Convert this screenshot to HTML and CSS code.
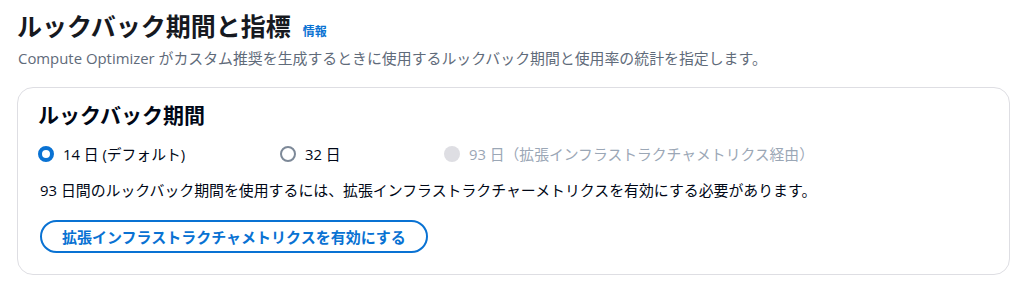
FILE: index.html
```html
<!DOCTYPE html>
<html lang="ja">
<head>
<meta charset="utf-8">
<link rel="stylesheet" href="styles.css">
</head>
<body>
<div class="page">
  <div class="header">
    <h1 class="title">ルックバック期間と指標</h1>
    <a class="info">情報</a>
  </div>
  <p class="desc">Compute Optimizer がカスタム推奨を生成するときに使用するルックバック期間と使用率の統計を指定します。</p>
  <div class="card">
    <h2 class="card-title">ルックバック期間</h2>
    <div class="radios">
      <label class="radio r1"><span class="dot checked"></span><span>14 日 (デフォルト)</span></label>
      <label class="radio r2"><span class="dot"></span><span>32 日</span></label>
      <label class="radio r3 disabled"><span class="dot off"></span><span>93 日（拡張インフラストラクチャメトリクス経由）</span></label>
    </div>
    <p class="note">93 日間のルックバック期間を使用するには、拡張インフラストラクチャーメトリクスを有効にする必要があります。</p>
    <button class="btn">拡張インフラストラクチャメトリクスを有効にする</button>
  </div>
</div>
</body>
</html>
```
FILE: styles.css
```css
* { box-sizing: border-box; }
body {
  margin: 0;
  background: #fff;
  font-family: "Open Sans", "Noto Sans CJK JP", sans-serif;
  color: #000716;
}
.page {
  padding: 8px 14px 0 17px;
}
.header {
  display: flex;
  align-items: baseline;
  gap: 12px;
}
.title {
  margin: 0;
  font-size: 25px;
  font-weight: 700;
  line-height: 36px;
  color: #16191f;
}
.info {
  font-size: 12px;
  font-weight: 700;
  color: #0972d3;
}
.desc {
  margin: 3px 0 0 1px;
  font-size: 14.9px;
  line-height: 22px;
  color: #5f6b7a;
}
.card {
  margin-top: 18px;
  width: 993px;
  border: 1px solid #dedee3;
  border-radius: 16px;
  padding: 12px 20px 21px;
}
.card-title {
  margin: 0;
  font-size: 21px;
  font-weight: 700;
  line-height: 30px;
  color: #000716;
}
.radios {
  display: flex;
  margin-top: 13px;
  font-size: 14.8px;
  line-height: 22px;
}
.radio {
  display: flex;
  align-items: center;
  gap: 9px;
  color: #000716;
}
.r1 { width: 242px; }
.r2 { width: 164px; }
.disabled { color: #9ba7b6; }
.dot {
  width: 16px;
  height: 16px;
  border-radius: 50%;
  border: 2px solid #7d8998;
  background: #fff;
}
.dot.checked {
  border: 4px solid #0972d3;
}
.dot.off {
  border: none;
  background: #dedee3;
}
.note {
  margin: 14px 0 0 2px;
  font-size: 14.9px;
  line-height: 22px;
  color: #000716;
}
.btn {
  display: block;
  margin: 19px 0 0 2px;
  height: 33px;
  padding: 0 20px;
  border: 2px solid #0972d3;
  border-radius: 20px;
  background: #fff;
  color: #0972d3;
  font-family: "Open Sans", "Noto Sans CJK JP", sans-serif;
  font-size: 15px;
  font-weight: 700;
}
```
